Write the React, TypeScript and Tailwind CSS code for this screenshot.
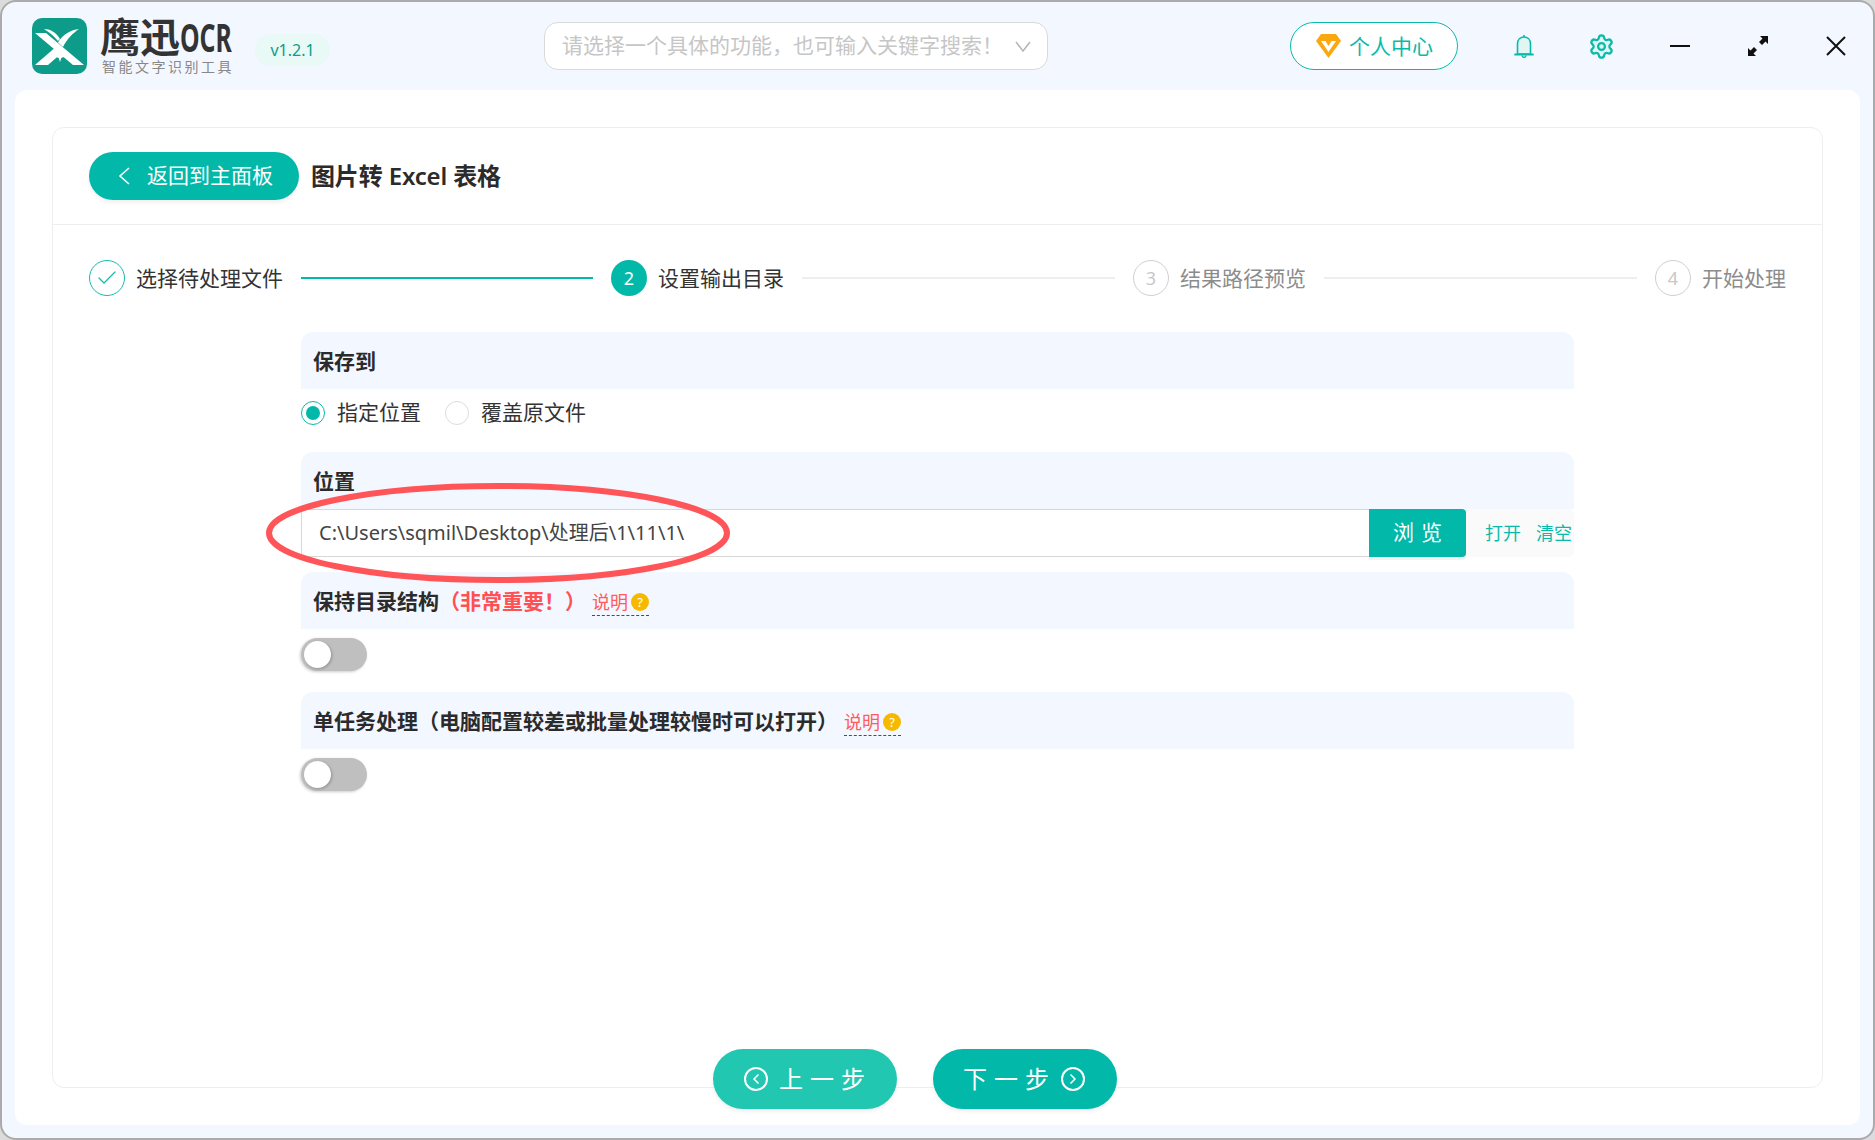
import { Check, ChevronLeft, ChevronRight, Settings } from 'lucide-react';

const CJK = 'font-["Noto_Sans","Noto_Sans_CJK_SC",sans-serif]';

function SectionHeader({ children, className = '' }: { children: React.ReactNode; className?: string }) {
  return (
    <div className={`h-[57px] bg-[#f3f7ff] rounded-t-xl pl-3 pt-[2px] flex items-center text-[21px] font-bold text-[#2b2b2b] ${className}`}>
      {children}
    </div>
  );
}

function Help() {
  return (
    <span className="flex items-center h-[26px] gap-[3px] border-b border-dashed border-[#f00] text-[18px] leading-none font-normal text-[#ff5c5c] mt-[2px]">
      说明
      <span className="w-[18px] h-[18px] rounded-full bg-[#f6b900] text-white text-[13px] flex items-center justify-center">?</span>
    </span>
  );
}

function Toggle() {
  return (
    <div className="w-[66px] h-[33px] rounded-full bg-[#bfbfbf] flex items-center pl-[3px] shadow-[-1px_1px_3px_rgba(0,0,0,0.2)]">
      <div className="w-[27px] h-[27px] rounded-full bg-white shadow-[1px_1px_3px_rgba(0,0,0,0.25)]" />
    </div>
  );
}

function Step({ n, label, state }: { n: number; label: string; state: 'done' | 'active' | 'todo' }) {
  return (
    <div className="flex items-center gap-[11px] shrink-0">
      {state === 'done' && (
        <div className="w-9 h-9 rounded-full border-[1.5px] border-[#14bcae] flex items-center justify-center">
          <Check className="w-6 h-6 text-[#14bcae]" strokeWidth={1.25} />
        </div>
      )}
      {state === 'active' && (
        <div className="w-9 h-9 rounded-full bg-[#02b9a9] text-white text-[18px] flex items-center justify-center">{n}</div>
      )}
      {state === 'todo' && (
        <div className="w-9 h-9 rounded-full border-[1.5px] border-[#cfcfcf] text-[#c8c8c8] text-[18px] flex items-center justify-center">{n}</div>
      )}
      <span className={`text-[21px] mt-[2px] ${state === 'todo' ? 'text-[#8c8c8c]' : 'text-[#333]'}`}>{label}</span>
    </div>
  );
}

function Logo() {
  return (
    <svg width="55" height="56" viewBox="0 0 55 56" className="shrink-0">
      <rect width="55" height="56" rx="10" fill="#0e9c8a" />
      <path d="M3 15 H14 L52 47 H41 Z" fill="#fff" />
      <path d="M3 47 H16 L32 33 L25.500 27.500 Z" fill="#fff" />
      <path d="M47 11 C39 12 31 16 26 24.500 L31 29 C35 21 41 15 47 11 Z" fill="#fff" />
      <path d="M12 11 C18 11 24 14 28 21 L26 23 C22 18 17 14 12 11 Z" fill="#fff" />
      <path d="M28 33 L29.300 37 L33 38.500 L29.300 40 L28 44 L26.700 40 L23 38.500 L26.700 37 Z" fill="#fff" />
    </svg>
  );
}

function Diamond() {
  return (
    <svg width="25" height="24" viewBox="0 0 25 24" className="shrink-0">
      <path d="M5 0 H20 L25 7 L12.500 24 L0 7 Z" fill="#fba70f" />
      <path d="M5 7 H9.500 L12.500 12 L15.500 7 H20 L12.500 18 Z" fill="#fff" />
    </svg>
  );
}

function Bell() {
  return (
    <svg width="20" height="25" viewBox="0 0 20 25" className="shrink-0">
      <path d="M10 1 V3" stroke="#0abaa9" strokeWidth="1.6" />
      <path d="M3.500 20 V10 C3.500 5.500 6.500 3 10 3 C13.500 3 16.500 5.500 16.500 10 V20 Z" fill="#e0f6f2" stroke="#0abaa9" strokeWidth="1.6" strokeLinejoin="round" />
      <path d="M1 20.500 H19" stroke="#0abaa9" strokeWidth="1.8" strokeLinecap="round" />
      <path d="M8 21.500 C8.500 24 11.500 24 12 21.500" fill="none" stroke="#0abaa9" strokeWidth="1.4" />
    </svg>
  );
}

function Expand() {
  return (
    <svg width="20" height="20" viewBox="0 0 20 20" className="shrink-0">
      <path d="M20 0 V8 L17.500 5.500 L14 9 L11 6 L14.500 2.500 L12 0 Z" fill="#111" />
      <path d="M0 20 V12 L2.500 14.500 L6 11 L9 14 L5.500 17.500 L8 20 Z" fill="#111" />
    </svg>
  );
}

function Close() {
  return (
    <svg width="20" height="20" viewBox="0 0 20 20" className="shrink-0">
      <path d="M1 1 L19 19 M19 1 L1 19" stroke="#111" strokeWidth="2" />
    </svg>
  );
}

export default function App() {
  return (
    <div className={`w-[1875px] h-[1140px] bg-[#dcdcdc] overflow-hidden ${CJK}`}>
      <div className="w-full h-full bg-[#f3f7ff] rounded-[16px] border-2 border-[#ababab] flex flex-col">
        {/* Title bar */}
        <div className="h-[88px] shrink-0 flex items-center pl-[30px]">
          <Logo />
          <div className="ml-[13px] w-[135px] shrink-0 flex flex-col">
            <div className="h-10 flex items-center text-[40px] leading-none font-bold text-[#333] whitespace-nowrap">
              <span>鹰迅</span>
              <span className="w-[53px] scale-x-[0.62] origin-left inline-block">OCR</span>
            </div>
            <div className="text-[14px] leading-[16px] mt-[2px] pl-[2px] tracking-[2.5px] text-[#888] whitespace-nowrap">智能文字识别工具</div>
          </div>
          <div className="ml-[20px] mt-[7px] shrink-0 w-[75px] h-8 rounded-full bg-[#e8f9f6] text-[#0e9c8c] text-[16px] flex items-center justify-center">v1.2.1</div>
          <div className="ml-[214px] shrink-0 w-[504px] h-12 rounded-[14px] bg-white border border-[#d9d9d9] flex items-center pl-[17px] pr-[16px] justify-between">
            <span className="text-[21px] text-[#c6c6c6] whitespace-nowrap">请选择一个具体的功能，也可输入关键字搜索！</span>
            <svg width="16" height="11" viewBox="0 0 16 11" className="shrink-0">
              <path d="M1 1 L8 10 L15 1" fill="none" stroke="#b5b5b5" strokeWidth="1.5" />
            </svg>
          </div>
          <div className="ml-[242px] shrink-0 w-[168px] h-12 rounded-full bg-white border-[1.5px] border-[#0abaa9] flex items-center pl-[25px] gap-[8px]">
            <Diamond />
            <span className="text-[21px] mt-[2px] text-[#0abaa9]">个人中心</span>
          </div>
          <div className="ml-[56px] shrink-0"><Bell /></div>
          <Settings className="ml-[54px] shrink-0 w-[27px] h-[27px] text-[#0abaa9] fill-[#e0f6f2]" strokeWidth={2} />
          <div className="ml-[55px] shrink-0 w-5 h-[2px] bg-[#111]" />
          <div className="ml-[58px] shrink-0"><Expand /></div>
          <div className="ml-[58px] shrink-0"><Close /></div>
        </div>

        {/* White card */}
        <div className="flex-1 mx-[13px] mb-[13px] bg-white rounded-xl p-[37px] flex flex-col">
          <div className="flex-1 border border-[#eeeeee] rounded-xl flex flex-col">
            <div className="h-[97px] shrink-0 border-b border-[#eeeeee] flex items-start pl-9 pt-6 gap-[12px]">
              <div className="w-[210px] h-12 rounded-full bg-[#02b9a9] shadow-[0_3px_4px_rgba(0,0,0,0.06)] text-white flex items-center pl-[29px] gap-[17px]">
                <svg width="12" height="18" viewBox="0 0 12 18" className="shrink-0">
                  <path d="M11 1 L2 9 L11 17" fill="none" stroke="#fff" strokeWidth="1.6" />
                </svg>
                <span className="text-[21px]">返回到主面板</span>
              </div>
              <h1 className="h-12 flex items-center text-[24px] font-semibold text-[#2b2b2b] tracking-[-0.15px]">图片转 Excel 表格</h1>
            </div>

            {/* Stepper */}
            <div className="pl-9 pt-[35px] flex items-center gap-[18px]">
              <Step n={1} label="选择待处理文件" state="done" />
              <div className="w-[292px] h-[2px] bg-[#02b9a9]" />
              <Step n={2} label="设置输出目录" state="active" />
              <div className="w-[313px] h-[2px] bg-[#eeeeee]" />
              <Step n={3} label="结果路径预览" state="todo" />
              <div className="w-[313px] h-[2px] bg-[#eeeeee]" />
              <Step n={4} label="开始处理" state="todo" />
            </div>

            {/* Form */}
            <div className="ml-[248px] w-[1273px] mt-9 flex-1 flex flex-col">
              <SectionHeader>保存到</SectionHeader>
              <div className="h-[63px] pt-3 flex items-start gap-[24px]">
                <label className="flex items-center gap-[12px] h-6">
                  <span className="w-6 h-6 rounded-full border border-[#0abaa9] flex items-center justify-center">
                    <span className="w-[14px] h-[14px] rounded-full bg-[#02b9a9]" />
                  </span>
                  <span className="text-[21px] text-[#333]">指定位置</span>
                </label>
                <label className="flex items-center gap-[12px] h-6">
                  <span className="w-6 h-6 rounded-full border border-[#dcdcdc]" />
                  <span className="text-[21px] text-[#333]">覆盖原文件</span>
                </label>
              </div>

              <SectionHeader>位置</SectionHeader>
              <div className="relative h-12 flex">
                <div className="flex-1 border-y border-l border-[#d8d8d8] flex items-center pl-[17px] text-[20px] text-[#444] whitespace-nowrap">
                  {'C:\\Users\\sqmil\\Desktop\\处理后\\1\\11\\1\\'}
                </div>
                <div className="w-[97px] bg-[#02b9a9] rounded-tr-[4px] rounded-br-[4px] shadow-[0_3px_0_rgba(0,0,0,0.05)] text-white text-[21px] tracking-[7px] flex items-center justify-center pl-[7px]">浏览</div>
                <div className="w-[108px] bg-[#fafafa] rounded-r-md flex items-center pl-[19px] gap-[15px] text-[18px] text-[#0abaa9]">
                  <span>打开</span>
                  <span>清空</span>
                </div>
                {/* red annotation drawn over the path field */}
                <svg width="470" height="104" viewBox="0 0 470 104" className="absolute left-[-38px] top-[-28px] pointer-events-none">
                  <ellipse cx="235" cy="52" rx="229" ry="47" fill="none" stroke="#ff5558" strokeWidth="6" />
                </svg>
              </div>

              <SectionHeader className="mt-[15px] gap-0">
                保持目录结构
                <span className="text-[#ff5054]">（非常重要！）</span>
                <span className="ml-[6px]"><Help /></span>
              </SectionHeader>
              <div className="pt-[9px]"><Toggle /></div>

              <SectionHeader className="mt-[21px]">
                单任务处理（电脑配置较差或批量处理较慢时可以打开）
                <span className="ml-[6px]"><Help /></span>
              </SectionHeader>
              <div className="pt-[9px]"><Toggle /></div>

              {/* Footer buttons sit across the panel's bottom border */}
              <div className="mt-auto -mb-[22px] -ml-[248px] w-[1769px] flex justify-start pl-[660px] gap-9 relative z-10 text-white text-[24px] tracking-[7px]">
                <div className="w-[184px] h-[60px] rounded-full bg-[#22c7b1] shadow-[0_2px_4px_rgba(0,0,0,0.08)] flex items-center pl-[31px] gap-[11px]">
                  <span className="w-6 h-6 rounded-full border-2 border-white flex items-center justify-center"><ChevronLeft className="w-4 h-4" strokeWidth={2.5} /></span>
                  上一步
                </div>
                <div className="w-[184px] h-[60px] rounded-full bg-[#02b9a9] shadow-[0_2px_4px_rgba(0,0,0,0.08)] flex items-center pl-[30px] gap-[5px]">
                  下一步
                  <span className="w-6 h-6 rounded-full border-2 border-white flex items-center justify-center"><ChevronRight className="w-4 h-4" strokeWidth={2.5} /></span>
                </div>
              </div>
            </div>
          </div>
        </div>
      </div>
    </div>
  );
}
